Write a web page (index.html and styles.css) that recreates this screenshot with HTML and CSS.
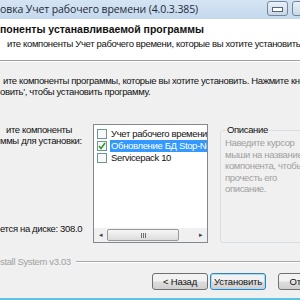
FILE: index.html
```html
<!DOCTYPE html>
<html lang="ru">
<head>
    <meta charset="UTF-8">
    <title>Установка Учет рабочего времени</title>
    <link rel="stylesheet" href="styles.css">
</head>
<body>
    <div class="window">
        <div class="titlebar">
            <span class="title">овка Учет рабочего времени (4.0.3.385)</span>
            <span class="caption-btn"><i></i></span>
            <span class="caption-btn next"></span>
        </div>

        <div class="header">
            <div class="header-title">поненты устанавливаемой программы</div>
            <div class="header-sub">ите компоненты Учет рабочего времени, которые вы хотите установить.</div>
        </div>

        <div class="content">
            <div class="intro">
                <div class="line first">ите компоненты программы, которые вы хотите установить. Нажмите кнопку</div>
                <div class="line">овить', чтобы установить программу.</div>
            </div>

            <div class="components">
                <div class="left-col">
                    <div class="comp-label"><span class="pad">ите компоненты</span><br>ммы для установки:</div>
                    <div class="space">ется на диске: 308.0</div>
                </div>

                <div class="tree">
                    <div class="tree-items">
                        <div class="item"><span class="check"></span><span class="name">Учет рабочего времени</span></div>
                        <div class="item"><span class="check">
                            <svg width="8" height="8" viewBox="0 0 8 8"><path d="M1 4 L3 6.5 L7 1" fill="none" stroke="#2d9a2d" stroke-width="1.6"/></svg>
                        </span><span class="name selected">Обновление БД Stop-Net</span></div>
                        <div class="item"><span class="check"></span><span class="name">Servicepack 10</span></div>
                    </div>
                    <div class="hscroll">
                        <span class="arrow">&#9666;</span>
                        <span class="track"><span class="thumb"><b></b><b></b><b></b></span></span>
                        <span class="arrow">&#9656;</span>
                    </div>
                </div>

                <fieldset class="desc">
                    <legend>Описание</legend>
                    <p>Наведите курсор<br>мыши на название<br>компонента, чтобы<br>прочесть его<br>описание.</p>
                </fieldset>
            </div>
        </div>

        <div class="branding">
            <span>stall System v3.03</span>
            <span class="rule"></span>
        </div>

        <div class="buttons">
            <button type="button" class="btn">&lt; Назад</button>
            <button type="button" class="btn focus">Установить</button>
            <button type="button" class="btn cancel">Отмена</button>
        </div>
    </div>
</body>
</html>
```

FILE: styles.css
```css
body {
    margin: 0;
    width: 300px;
    height: 300px;
    overflow: hidden;
    font-family: "Liberation Sans", Arial, sans-serif;
    font-size: 9.5px;
    letter-spacing: -0.35px;
    color: #111;
}

.window {
    width: 300px;
    height: 300px;
    background-color: #f0f0f0;
    border-bottom: 2px solid #5ec3df;
    box-sizing: border-box;
    overflow: hidden;
}

/* title bar */
.titlebar {
    height: 19px;
    display: flex;
    align-items: flex-start;
    background: linear-gradient(#d5e4f3, #c4d8ed);
    white-space: nowrap;
}

.title {
    flex: 1;
    font-family: "Open Sans", "Liberation Sans", sans-serif;
    font-size: 10.5px;
    letter-spacing: -0.1px;
    line-height: 18px;
    color: #1e2a38;
    overflow: hidden;
}

.caption-btn {
    width: 21px;
    height: 15px;
    margin-top: 1px;
    border: 1px solid #76869a;
    border-radius: 3px;
    background: linear-gradient(#eaf1f9, #c9d7e7);
    display: flex;
    align-items: center;
    justify-content: center;
    box-sizing: border-box;
    flex-shrink: 0;
}

.caption-btn i {
    width: 9px;
    height: 3px;
    margin-top: 2px;
    background-color: #fff;
    border: 1px solid #55657a;
}

.caption-btn.next {
    margin-left: 4px;
    margin-right: -13px;
}

/* white header */
.header {
    height: 41px;
    background-color: #fff;
    border-bottom: 1px solid #a0a0a0;
    box-shadow: 0 1px 0 #fff;
    white-space: nowrap;
    overflow: hidden;
}

.header-title {
    font-weight: bold;
    font-size: 10.5px;
    letter-spacing: 0;
    padding-top: 4px;
    line-height: 13px;
}

.header-sub {
    padding-left: 7px;
    padding-top: 1px;
    line-height: 13px;
}

/* body */
.content {
    padding-top: 14px;
}

.intro {
    white-space: nowrap;
    line-height: 11px;
}

.intro .first {
    padding-left: 3px;
}

.components {
    display: flex;
    margin-top: 27px;
    height: 119px;
}

.left-col {
    width: 93px;
    flex-shrink: 0;
    display: flex;
    flex-direction: column;
    justify-content: space-between;
    padding-bottom: 8px;
    box-sizing: border-box;
    white-space: nowrap;
    overflow: hidden;
}

.comp-label {
    line-height: 11px;
    padding-top: 0;
}

.comp-label .pad {
    padding-left: 6px;
}

.space {
    line-height: 12px;
}

.tree {
    width: 115px;
    flex-shrink: 0;
    box-sizing: border-box;
    background-color: #fff;
    border: 1px solid #828790;
    display: flex;
    flex-direction: column;
    justify-content: space-between;
    overflow: hidden;
}

.tree-items {
    padding-top: 3px;
}

.item {
    display: flex;
    align-items: center;
    height: 12px;
    white-space: nowrap;
}

.check {
    width: 10px;
    height: 10px;
    margin-left: 3px;
    margin-right: 3px;
    border: 1px solid #6d9797;
    box-sizing: border-box;
    background-color: #f8f8f8;
    flex-shrink: 0;
    display: flex;
    align-items: center;
    justify-content: center;
}

.name {
    padding: 0 1px;
    line-height: 12px;
}

.name.selected {
    background-color: #3399ff;
    color: #fff;
}

.hscroll {
    height: 14px;
    display: flex;
    align-items: center;
    background-color: #f0f0f0;
}

.arrow {
    width: 13px;
    text-align: center;
    font-size: 7px;
    color: #404040;
}

.track {
    flex: 1;
    height: 12px;
}

.thumb {
    width: 72px;
    height: 12px;
    display: flex;
    align-items: center;
    justify-content: center;
    gap: 1px;
    border: 1px solid #9a9a9a;
    border-radius: 2px;
    background: linear-gradient(#f6f6f6, #dcdcdc);
    box-sizing: border-box;
}

.thumb b {
    width: 1px;
    height: 5px;
    background-color: #707070;
}

.desc {
    flex: 1;
    margin: 0 -10px 0 12px;
    padding: 0 4px;
    border: 1px solid #d8dfe4;
    border-radius: 3px;
    min-width: 0;
}

.desc legend {
    padding: 0 1px;
    margin-left: 1px;
    line-height: 12px;
    color: #111;
}

.desc p {
    margin: 0;
    padding-top: 1px;
    line-height: 11.5px;
    color: #a0a0a0;
    white-space: nowrap;
}

/* branding line */
.branding {
    display: flex;
    align-items: center;
    margin-top: 12px;
    height: 12px;
    color: #a0a0a0;
    white-space: nowrap;
}

.branding .rule {
    flex: 1;
    height: 1px;
    margin-left: 5px;
    background-color: #a8a8a8;
    box-shadow: 0 1px 0 #fff;
}

/* buttons */
.buttons {
    display: flex;
    padding-left: 152px;
    margin-top: 6px;
    gap: 2px;
}

.btn {
    font-family: "Liberation Sans", Arial, sans-serif;
    font-size: 9.5px;
    letter-spacing: -0.2px;
    color: #111;
    width: 56px;
    height: 17px;
    padding: 0;
    border: 1px solid #707070;
    border-radius: 3px;
    background: linear-gradient(#f2f2f2 45%, #dddddd 55%, #cfcfcf);
    flex-shrink: 0;
}

.btn.focus {
    border-color: #3c7fb1;
    box-shadow: inset 0 0 0 1px #a6dcf6;
}

.btn.cancel {
    margin-left: 10px;
}
```
